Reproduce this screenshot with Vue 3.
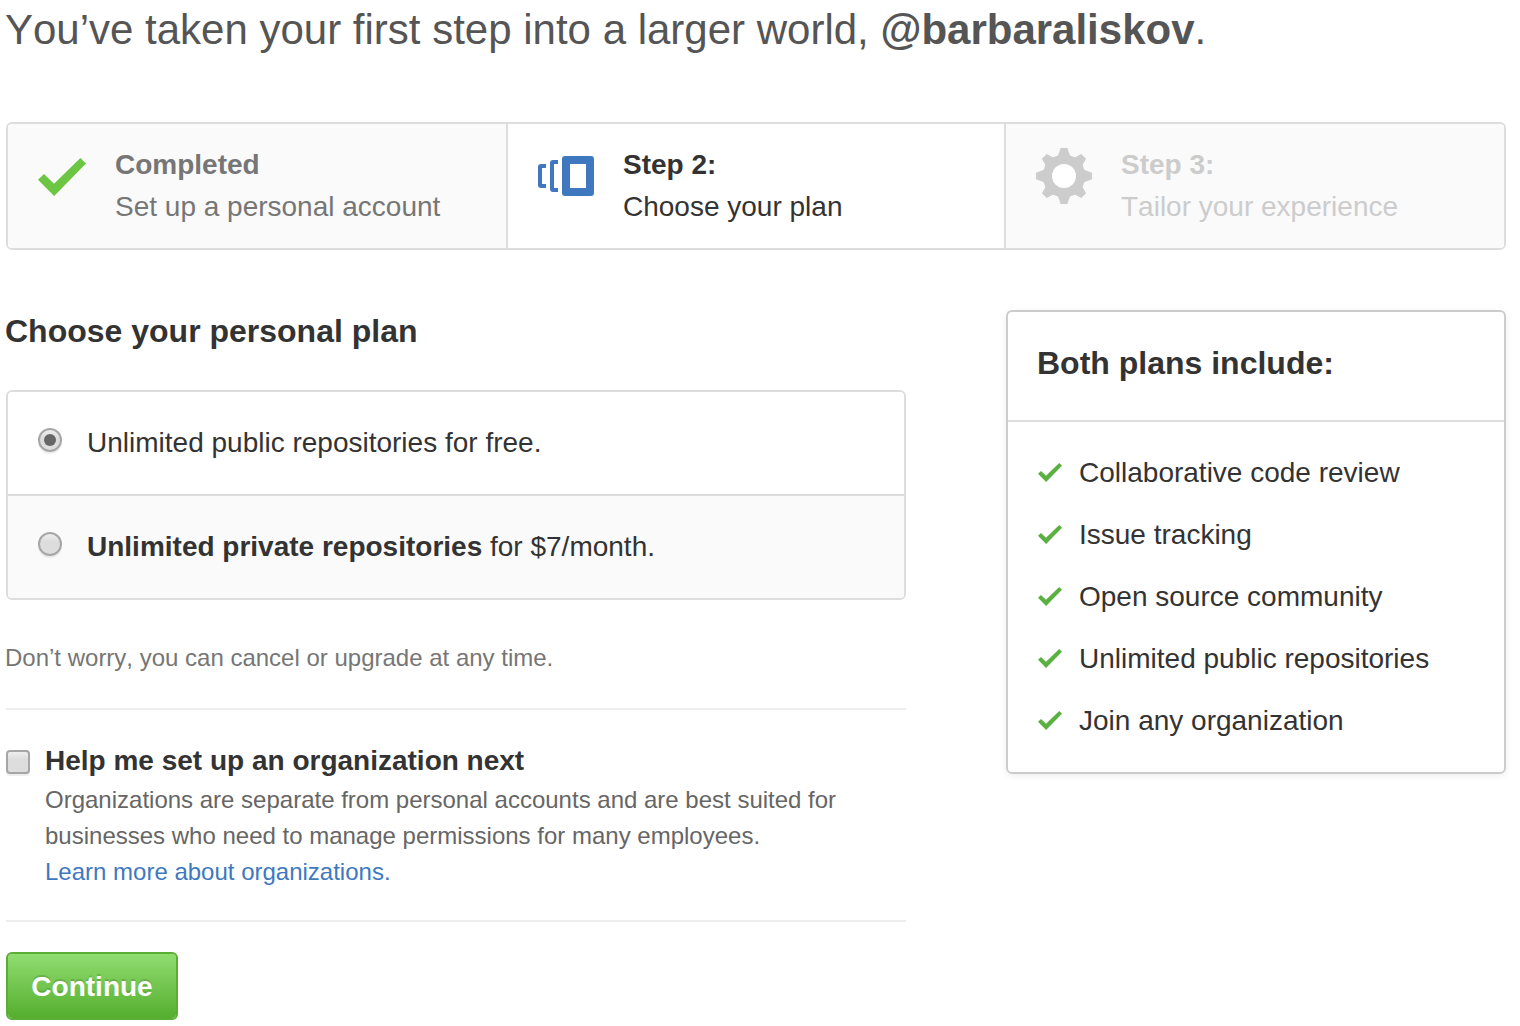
<script setup>
const features = [
  'Collaborative code review',
  'Issue tracking',
  'Open source community',
  'Unlimited public repositories',
  'Join any organization',
]
</script>

<template>
  <main class="page">
    <h1 class="headline">You’ve taken your first step into a larger world, <strong>@barbaraliskov</strong>.</h1>

    <ol class="steps">
      <li class="step done">
        <svg class="step-icon check" width="48" height="38" viewBox="0 0 48 38"><path d="M0 21.7L6 15.9L16 25.7L42.4 0L48 5.5L16.2 38z" fill="#6cc644" /></svg>
        <div><strong>Completed</strong><span>Set up a personal account</span></div>
      </li>
      <li class="step current">
        <svg class="step-icon plan" width="56" height="40" viewBox="0 0 56 40" fill="#4078c0">
          <path d="M8 8v4H4v8v8h4v4H3a3 3 0 0 1-3-3V11a3 3 0 0 1 3-3z" />
          <path d="M20 4v4h-4v24h4v4h-5a3 3 0 0 1-3-3V7a3 3 0 0 1 3-3z" />
          <path fill-rule="evenodd" d="M27 0h26a3 3 0 0 1 3 3v34a3 3 0 0 1-3 3H27a3 3 0 0 1-3-3V3a3 3 0 0 1 3-3zM32 8v24h16V8z" />
        </svg>
        <div><strong>Step 2:</strong><span>Choose your plan</span></div>
      </li>
      <li class="step upcoming">
        <svg class="step-icon gear" width="56" height="56" viewBox="0 0 56 56">
          <path fill="#ccc" d="M24.7 0H31.3L33.9 7.3Q36.3 8.9 39.2 9.3L45.3 5.9L50.1 10.7L46.7 16.8Q47.1 19.7 48.7 22.1L56 24.7V31.3L48.7 33.9Q47.1 36.3 46.7 39.2L50.1 45.3L45.3 50.1L39.2 46.7Q36.3 47.1 33.9 48.7L31.3 56H24.7L22.1 48.7Q19.7 47.1 16.8 46.7L10.7 50.1L5.9 45.3L9.3 39.2Q8.9 36.3 7.3 33.9L0 31.3V24.7L7.3 22.1Q8.9 19.7 9.3 16.8L5.9 10.7L10.7 5.9L16.8 9.3Q19.7 8.9 22.1 7.3z" />
          <circle cx="28" cy="28" r="12" fill="#fff" />
        </svg>
        <div><strong>Step 3:</strong><span>Tailor your experience</span></div>
      </li>
    </ol>

    <div class="columns">
      <section class="main">
        <h2>Choose your personal plan</h2>
        <div class="plans">
          <label class="plan-row"><i class="radio on"></i><span>Unlimited public repositories for free.</span></label>
          <label class="plan-row alt"><i class="radio"></i><span><strong>Unlimited private repositories</strong> for $7/month.</span></label>
        </div>
        <p class="note">Don’t worry, you can cancel or upgrade at any time.</p>
        <div class="organization">
          <i class="checkbox"></i>
          <div>
            <strong>Help me set up an organization next</strong>
            <p>Organizations are separate from personal accounts and are best suited for<br>businesses who need to manage permissions for many employees.<br><a>Learn more about organizations.</a></p>
          </div>
        </div>
        <button type="button">Continue</button>
      </section>

      <aside class="includes">
        <h2>Both plans include:</h2>
        <ul>
          <li v-for="feature in features" :key="feature">
            <svg width="24" height="19" viewBox="0 0 48 38"><path d="M0 21.7L6 15.9L16 25.7L42.4 0L48 5.5L16.2 38z" fill="#5ab041" /></svg>
            <span>{{ feature }}</span>
          </li>
        </ul>
      </aside>
    </div>
  </main>
</template>

<style>
body { margin: 0; background: #fff; }
</style>

<style scoped>
* { box-sizing: border-box; }
.page { width: 1520px; height: 1026px; overflow: hidden; padding: 0 14px 0 6px; font: 28px/42px "Liberation Sans", Arial, sans-serif; font-kerning: none; color: #333; }
h1, h2, p, ol, ul { margin: 0; padding: 0; list-style: none; }
.headline { height: 122px; margin-left: -1px; padding-top: 5px; font-size: 42px; line-height: 50px; font-weight: 400; color: #555; white-space: nowrap; }
.steps { display: flex; height: 128px; border: 2px solid #ddd; border-radius: 6px; overflow: hidden; }
.step { display: flex; padding: 20px 0 0 30px; white-space: nowrap; }
.step + .step { border-left: 2px solid #ddd; }
.step strong, .step span { display: block; }
.step-icon { flex: none; }
.done { width: 498px; background: #fafafa; color: #767676; }
.current { width: 498px; }
.upcoming { flex: 1; background: #fafafa; color: #ccc; }
.check { margin: 14px 29px 0 0; }
.plan { margin: 12px 29px 0 0; }
.gear { margin: 4px 29px 0 0; }
.columns { display: flex; justify-content: space-between; align-items: flex-start; margin-top: 60px; }
.main { width: 900px; }
h2 { font-size: 32px; line-height: 42px; }
.main h2 { height: 80px; margin-left: -1px; }
.plans { height: 210px; border: 2px solid #ddd; border-radius: 6px; overflow: hidden; }
.plan-row { display: flex; height: 102px; padding: 30px 0 0 30px; }
.plan-row.alt { height: 104px; border-top: 2px solid #ddd; background: #fafafa; }
.radio, .checkbox { flex: none; width: 24px; height: 24px; border: 2px solid #a6a6a6; background: linear-gradient(#eee, #dcdcdc 40%, #ddd); box-shadow: 0 2px 1px rgba(0, 0, 0, .07); }
.radio { display: flex; align-items: center; justify-content: center; border-radius: 50%; margin: 6px 25px 0 0; }
.radio.on::after { content: ""; width: 12px; height: 12px; border-radius: 50%; background: #666; }
.note { height: 108px; margin-left: -1px; padding-top: 40px; font-size: 24px; line-height: 36px; color: #767676; }
.organization { display: flex; height: 214px; padding-top: 30px; border: solid #eee; border-width: 2px 0; }
.organization strong { display: block; line-height: 42px; }
.organization p { font-size: 24px; line-height: 36px; color: #666; white-space: nowrap; }
.organization a { color: #4078c0; }
.checkbox { margin: 10px 15px 0 0; border-radius: 4px; }
button { display: block; width: 172px; height: 68px; margin-top: 30px; padding: 2px 0 0; border: 2px solid #5aad35; border-radius: 6px; background: linear-gradient(#90dd70, #55ae2e) padding-box; color: #fff; font: bold 28px/42px "Liberation Sans", Arial, sans-serif; text-shadow: 0 -2px 0 rgba(0, 0, 0, .15); }
.includes { width: 500px; height: 464px; border: 2px solid #ccc; border-radius: 6px; box-shadow: 0 2px 6px rgba(0, 0, 0, .07); }
.includes h2 { height: 110px; padding: 30px 0 0 29px; border-bottom: 2px solid #ddd; }
.includes ul { padding: 20px 0 0 30px; }
.includes li { display: flex; align-items: center; height: 62px; gap: 17px; }
.includes svg { margin-bottom: 2px; }
</style>
